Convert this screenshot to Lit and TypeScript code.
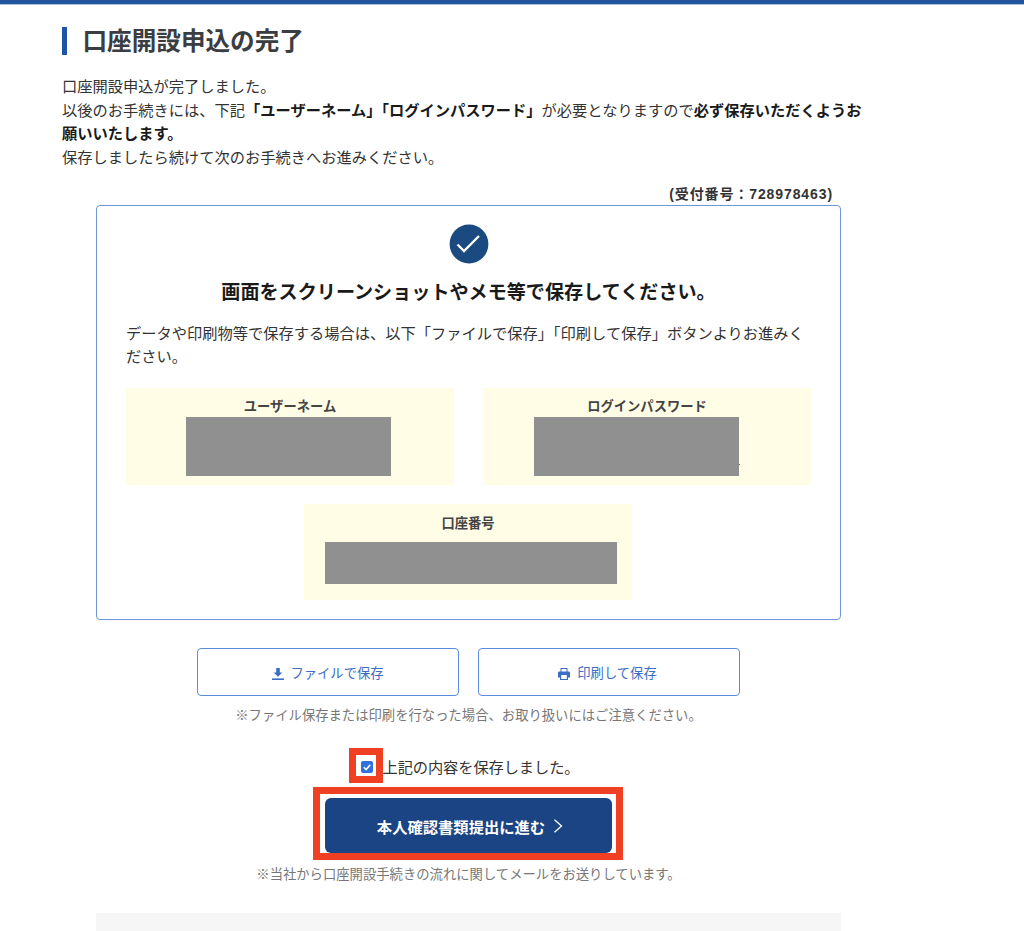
import { LitElement, html, css } from "lit";
import { customElement } from "lit/decorators.js";

@customElement("app-root")
export class AppRoot extends LitElement {
  static styles = css`
    :host { display: block; height: 931px; overflow: hidden; background: #fff; color: #333;
      font-family: "Liberation Sans", "Noto Sans CJK JP", sans-serif; font-size: 15px; }
    * { box-sizing: border-box; }
    .topbar { height: 5px; background: #22549c; border-bottom: 1px solid #a9c0e0; }
    .page { width: 813px; margin-left: 62px; }
    h1 { margin: 22px 0 0; height: 28px; border-left: 5px solid #1f53a3; padding-left: 15.500px;
      font-size: 24.600px; line-height: 30px; font-weight: 700; color: #3a3d42; }
    .intro { margin: 20px 0 0; font-size: 15.260px; line-height: 23.600px; color: #333; }
    .intro b { color: #1a1a1a; }
    .receipt { margin: 18px 42px 0 0; height: 16px; text-align: right; font-size: 14px; line-height: 15px;
      font-weight: 700; letter-spacing: 0.900px; color: #333; }
    .box { width: 745px; height: 415px; margin: 2px auto 0 34px; border: 1px solid #6f96d8; border-radius: 4px;
      padding: 18px 29px 0; }
    .check { display: block; margin: 0 auto; width: 40px; height: 40px; }
    h2 { margin: 15px 0 0; height: 28px; text-align: center; font-size: 19.100px; line-height: 28px;
      font-weight: 700; color: #1a1a1a; }
    .desc { margin: 15px 0 0; font-size: 15.260px; line-height: 23px; color: #333; }
    .cells { display: flex; flex-wrap: wrap; justify-content: center; column-gap: 29px; row-gap: 19px; margin-top: 20px; }
    .cell { width: 328px; height: 97px; background: #fffde6; display: flex; flex-direction: column; align-items: flex-start; }
    .label { align-self: center; height: 29px; padding-top: 10px; font-size: 13.300px; line-height: 18px; font-weight: 700; color: #444; }
    .mask { position: relative; background: #909090; width: 205px; height: 59px; margin-left: 60px; }
    .pass .mask { margin-left: 51px; }
    .pass .mask::after { content: ""; position: absolute; left: 205px; top: 47px; width: 1px; height: 1px; background: #666; }
    .wide { height: 96px; margin-right: 1px; }
    .wide .label { height: 38px; padding-top: 11px; }
    .wide .mask { width: 292px; height: 42px; margin-left: 21px; }
    .buttons { display: flex; gap: 19px; margin: 28px 0 0 135px; }
    .btn { width: 262px; height: 48px; display: flex; align-items: center; justify-content: center; gap: 6px;
      border: 1px solid #5b8bdc; border-radius: 4px; background: #fff; color: #3b6ec2; font-size: 13.300px;
      font-family: inherit; padding: 0; }
    .btn svg { display: block; margin-top: 3px; }
    .btn.print { gap: 7px; padding-right: 3px; }
    .note { text-align: center; width: 745px; margin-left: 34px; font-size: 13.330px; line-height: 18px; color: #777; }
    .note.first { margin-top: 11px; margin-bottom: 0; }
    .agree { display: flex; align-items: center; margin: 23px 0 0 34px; height: 35px; padding-left: 253px; }
    .cbframe { width: 34px; height: 35px; border: 7px solid #ef4023; background: #fff; display: flex; align-items: center; justify-content: center; padding: 3px 0 0 2px; }
    .cb { width: 12px; height: 12px; border-radius: 2px; background: #2f6fe0; display: block; }
    .agree span { font-size: 15.260px; letter-spacing: -0.100px; color: #333; margin-left: -0.500px; }
    .cta-row { display: flex; margin: 4px 0 0 251px; }
    .cta-frame { width: 310px; height: 73px; border: 7px solid #ef4023; background: #fff; padding: 4px 4px 0 5px; }
    .cta { width: 287px; height: 55px; margin: 0; border: 0; border-radius: 6px; background: #1a4483; color: #fff;
      font-family: inherit; font-size: 15.300px; font-weight: 700; display: flex; align-items: center; justify-content: center; gap: 8px; padding: 0 0 0 3px; }
    .note.last { margin-top: 6px; margin-bottom: 0; }
    .foot { width: 745px; height: 30px; margin: 29px 0 0 34px; background: #f6f6f6; }
  `;

  render() {
    return html`
      <div class="topbar"></div>
      <div class="page">
        <h1>口座開設申込の完了</h1>
        <p class="intro">
          口座開設申込が完了しました。<br />
          以後のお手続きには、下記<b>「ユーザーネーム」「ログインパスワード」</b>が必要となりますので<b>必ず保存いただくようお<br />願いいたします。</b><br />
          保存しましたら続けて次のお手続きへお進みください。
        </p>
        <div class="receipt">(受付番号：728978463)</div>
        <section class="box">
          <svg class="check" viewBox="0 0 40 40">
            <circle cx="20" cy="20" r="19.400" fill="#1a4a80" />
            <path d="M8.500 20.500l6.500 6.500L30 12" fill="none" stroke="#fff" stroke-width="2.300" />
          </svg>
          <h2>画面をスクリーンショットやメモ等で保存してください。</h2>
          <p class="desc">データや印刷物等で保存する場合は、以下「ファイルで保存」「印刷して保存」ボタンよりお進みください。</p>
          <div class="cells">
            <div class="cell"><div class="label">ユーザーネーム</div><div class="mask"></div></div>
            <div class="cell pass"><div class="label">ログインパスワード</div><div class="mask"></div></div>
            <div class="cell wide"><div class="label">口座番号</div><div class="mask"></div></div>
          </div>
        </section>
        <div class="buttons">
          <button class="btn">
            <svg width="12" height="12" viewBox="0 0 12 12"><path d="M4.200 0h3.600v4.500h2.500L6 8.800 1.700 4.500h2.500z" fill="#3b6ec2"/><rect y="10.400" width="12" height="1.600" fill="#3b6ec2"/></svg>
            ファイルで保存
          </button>
          <button class="btn print">
            <svg width="12" height="12" viewBox="0 0 12 12"><path fill-rule="evenodd" d="M2.500 0h7v3.500h1.200A1.300 1.300 0 0 1 12 4.800V9.500H10V12H2V9.500H0V4.800A1.300 1.300 0 0 1 1.300 3.500h1.200zM3.500 1v2.500h5V1zM3.200 7v3.900h5.600V7z" fill="#3b6ec2"/></svg>
            印刷して保存
          </button>
        </div>
        <p class="note first">※ファイル保存または印刷を行なった場合、お取り扱いにはご注意ください。</p>
        <div class="agree">
          <div class="cbframe">
            <svg class="cb" viewBox="0 0 12 12"><path d="M2.800 6.200l2.300 2.300 4.200-4.800" fill="none" stroke="#fff" stroke-width="1.600"/></svg>
          </div>
          <span>上記の内容を保存しました。</span>
        </div>
        <div class="cta-row">
          <div class="cta-frame">
            <button class="cta">本人確認書類提出に進む
              <svg width="10" height="14" viewBox="0 0 10 14"><path d="M1.500 0.800L8.500 7l-7 6.200" fill="none" stroke="#fff" stroke-width="1.300"/></svg>
            </button>
          </div>
        </div>
        <p class="note last">※当社から口座開設手続きの流れに関してメールをお送りしています。</p>
        <div class="foot"></div>
      </div>
    `;
  }
}
